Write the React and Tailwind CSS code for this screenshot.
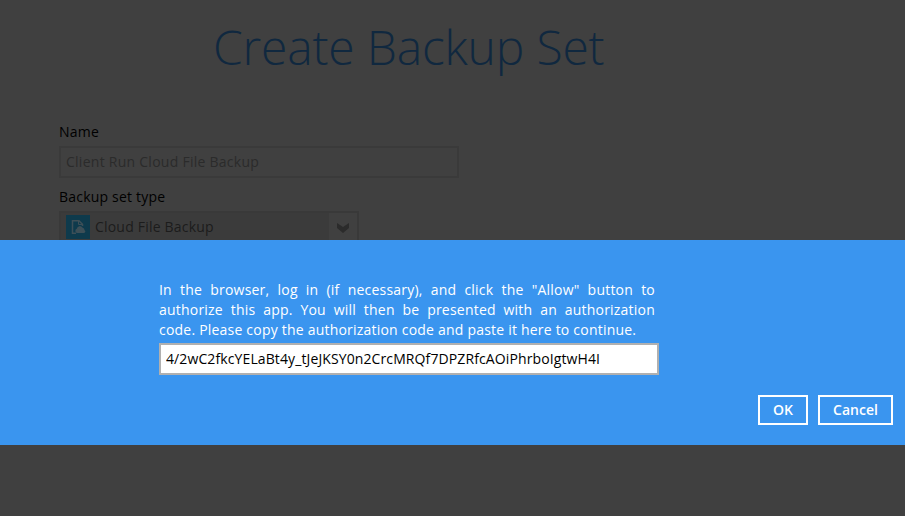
function CloudFileIcon() {
  return (
    <svg width="24" height="24" viewBox="0 0 24 24" fill="none" className="shrink-0 bg-[#0e3a4c]">
      <path d="M10 18.25H6.5V5.75H13L16.5 9.25V11" stroke="#3d4f57" strokeWidth="1.5" />
      <path d="M12.5 5.5V9.5H16.5" stroke="#3d4f57" strokeWidth="1" />
      <path d="M10.9 18a2.2 2.2 0 0 1-.1-4.2 3 3 0 0 1 5.6-1.2 2.8 2.8 0 0 1 2.2 2.6 1.5 1.5 0 0 1-.6 2.8z" fill="#3d4f57" />
    </svg>
  )
}

function DialogButton({ label, className }) {
  return (
    <button className={`h-[30px] border-2 border-white text-[14px] leading-[26px] font-semibold text-white ${className}`}>
      {label}
    </button>
  )
}

function BackupSetForm() {
  return (
    <div className="h-[240px] overflow-hidden">
      <h1 className="pt-[14px] pl-[213px] text-[48px] leading-[66px] font-light tracking-[-0.19px] text-[#10283f] whitespace-nowrap">
        Create Backup Set
      </h1>

      <div className="pl-[59px] pt-[42px] text-[14px] leading-[20px] tracking-[0.2px] text-black">
        <p>Name</p>
        <div className="mt-1 w-[400px] h-[32px] border-2 border-[#3a3a3a] px-[5px] leading-[28px] tracking-[0.26px] text-[#2b2b2b]">
          Client Run Cloud File Backup
        </div>

        <p className="mt-[9px]">Backup set type</p>
        <div className="mt-1 w-[300px] h-[32px] flex border-2 border-[#393939]">
          <div className="flex-1 flex items-start gap-[5px] bg-[#3b3b3b] pl-[5px] pt-[2px] text-[#1c1c1c]">
            <CloudFileIcon />
            <span className="leading-[24px]">Cloud File Backup</span>
          </div>
          <div className="w-[28px] flex justify-center pt-[10px]">
            <svg width="12" height="10" viewBox="0 0 12 10">
              <path d="M0 0L6 4L12 0V5L6 10L0 5Z" fill="#2b2b2b" />
            </svg>
          </div>
        </div>
      </div>
    </div>
  )
}

export default function App() {
  return (
    <div
      className="w-full h-[516px] bg-[#404040] font-[380] overflow-hidden"
      style={{ fontFamily: '"Open Sans", "Noto Sans", sans-serif' }}
    >
      <BackupSetForm />

      {/* Authorization prompt */}
      <div className="h-[205px] bg-[#3a95ef] pt-[40px] pr-3">
        <div className="ml-[159px] w-[500px]">
          <p className="w-[496px] text-[14px] leading-[20px] tracking-[0.21px] text-justify text-white">
            In the browser, log in (if necessary), and click the "Allow" button to authorize this app. You will then be
            presented with an authorization code.&nbsp;Please copy the authorization code and paste it here to continue.
          </p>
          <input
            type="text"
            defaultValue="4/2wC2fkcYELaBt4y_tJeJKSY0n2CrcMRQf7DPZRfcAOiPhrboIgtwH4I"
            className="block mt-[3px] w-full h-[32px] border-2 border-[#b0b0b0] bg-white px-[5px] pb-[2px] text-[14px] tracking-[0.11px] text-black outline-none"
          />
        </div>
        <div className="mt-5 flex justify-end gap-[10px]">
          <DialogButton label="OK" className="w-[50px]" />
          <DialogButton label="Cancel" className="w-[75px]" />
        </div>
      </div>
    </div>
  )
}
